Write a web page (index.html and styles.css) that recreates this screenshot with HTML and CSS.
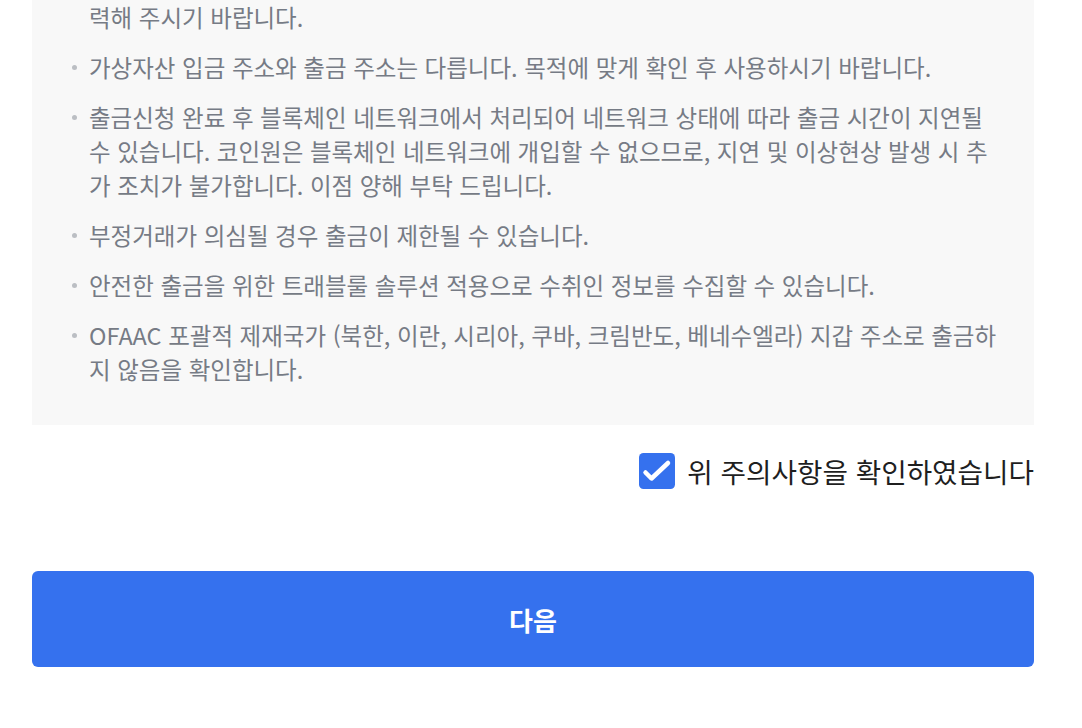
FILE: index.html
```html
<!DOCTYPE html>
<html lang="ko">
<head>
    <meta charset="UTF-8">
    <meta name="viewport" content="width=device-width, initial-scale=1.0">
    <title>출금 주의사항</title>
    <link rel="stylesheet" href="styles.css">
</head>
<body>
    <div class="withdraw">
        <div class="notice-box">
            <ul class="notice-list">
                <li class="cont">력해 주시기 바랍니다.</li>
                <li>가상자산 입금 주소와 출금 주소는 다릅니다. 목적에 맞게 확인 후 사용하시기 바랍니다.</li>
                <li>출금신청 완료 후 블록체인 네트워크에서 처리되어 네트워크 상태에 따라 출금 시간이 지연될 수 있습니다. 코인원은 블록체인 네트워크에 개입할 수 없으므로, 지연 및 이상현상 발생 시 추가 조치가 불가합니다. 이점 양해 부탁 드립니다.</li>
                <li>부정거래가 의심될 경우 출금이 제한될 수 있습니다.</li>
                <li>안전한 출금을 위한 트래블룰 솔루션 적용으로 수취인 정보를 수집할 수 있습니다.</li>
                <li>OFAAC 포괄적 제재국가 (북한, 이란, 시리아, 쿠바, 크림반도, 베네수엘라) 지갑 주소로 출금하지 않음을 확인합니다.</li>
            </ul>
        </div>

        <label class="agree">
            <span class="check-icon">
                <svg width="36" height="36" viewBox="0 0 36 36">
                    <rect x="0" y="0" width="36" height="36" rx="4.5" fill="#3571ee"/>
                    <path d="M6.5 19.5 L12.5 25.5 L29 10" fill="none" stroke="#fff" stroke-width="4.5" stroke-linecap="round" stroke-linejoin="round"/>
                </svg>
            </span>
            <span class="agree-text">위 주의사항을 확인하였습니다</span>
        </label>

        <button class="next-btn">다음</button>
    </div>
</body>
</html>
```

FILE: styles.css
```css
body {
    margin: 0;
    font-family: "Noto Sans CJK KR", "Noto Sans", sans-serif;
    background: #fff;
}
.withdraw {
    padding: 0 48px 0 32px;
}
.notice-box {
    background: #f8f8f8;
    padding: 0 32px 39px 0;
}
.notice-list {
    list-style: none;
    margin: 0;
    padding: 0 0 0 57px;
}
.notice-list li {
    position: relative;
    font-size: 23.5px;
    line-height: 34px;
    color: #767b85;
    margin-top: 16px;
}
.notice-list li::before {
    content: "";
    position: absolute;
    left: -17px;
    top: 15px;
    width: 5px;
    height: 5px;
    border-radius: 50%;
    background: #bbbec3;
}
.notice-list li.cont {
    margin-top: 0;
}
.notice-list li.cont::before {
    display: none;
}
.agree {
    display: flex;
    justify-content: flex-end;
    align-items: center;
    gap: 12px;
    margin-top: 28px;
}
.check-icon {
    display: flex;
}
.agree-text {
    font-size: 27.7px;
    color: #1f1f1f;
    line-height: 36px;
}
.next-btn {
    display: block;
    width: 100%;
    height: 96px;
    margin-top: 82px;
    border: none;
    border-radius: 6px;
    background: #3571ee;
    color: #fff;
    font-family: inherit;
    font-size: 26px;
    font-weight: 700;
}
```
